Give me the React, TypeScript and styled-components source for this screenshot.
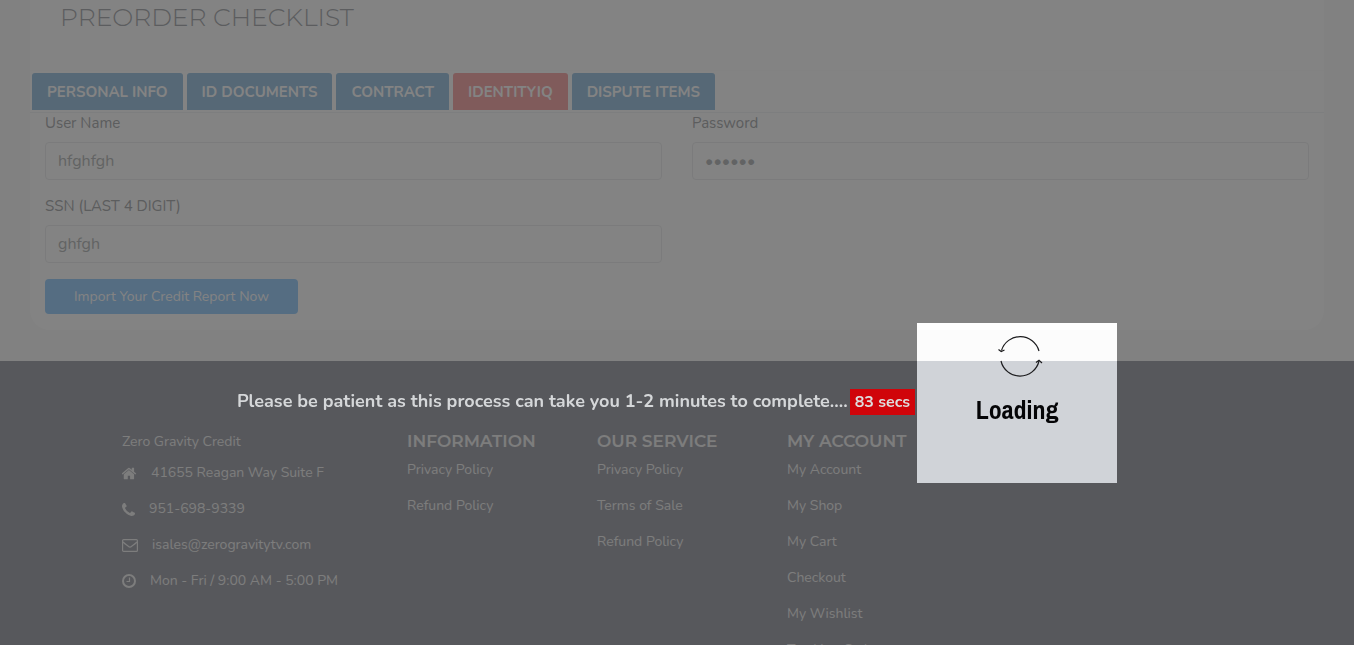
import React from "react";
import styled, { createGlobalStyle } from "styled-components";

const bodyFont = `Nunito, Lato, "Open Sans", sans-serif`;
const headingFont = `Montserrat, Inter, "Open Sans", sans-serif`;

const GlobalStyle = createGlobalStyle`
  *, *::before, *::after { box-sizing: border-box; }
  body {
    margin: 0;
    background: #fafafa;
    font-family: ${bodyFont};
    font-size: 14px;
    line-height: 20px;
    overflow: hidden;
  }
`;

const Page = styled.div`
  height: 100vh;
  overflow: hidden;
`;

const Panel = styled.main`
  margin: 0 30px 31px;
  padding-bottom: 16px;
  background: #ffffff;
  border-radius: 0 0 20px 20px;
`;

const PanelHeader = styled.header`
  height: 71px;
  padding: 1px 30px 0;
  border-bottom: 1px solid #fcfcfc;
`;

const Title = styled.h1`
  margin: 0;
  color: #b0b2b6;
  font-family: ${headingFont};
  font-size: 25px;
  font-weight: 300;
  line-height: 32px;
`;

const Tabs = styled.nav`
  display: flex;
  gap: 4px;
  padding: 2px;
  border-bottom: 1px solid #f2f4f6;
`;

const Tab = styled.button<{ $active?: boolean }>`
  height: 37px;
  padding: 0 15px;
  border: 0;
  border-radius: 3px 3px 0 0;
  background: ${(p) => (p.$active ? "#f8aeae" : "#a4c8e4")};
  color: #ffffff;
  font-family: inherit;
  font-size: 15px;
  font-weight: 700;
  line-height: 20px;
  white-space: nowrap;
`;

const Form = styled.form`
  display: grid;
  grid-template-columns: 1fr 1fr;
  column-gap: 30px;
  row-gap: 16px;
  padding: 0 15px;
`;

const Field = styled.div`
  display: flex;
  flex-direction: column;
`;

const Label = styled.label`
  margin-bottom: 8px;
  color: #b0b2b4;
  font-size: 15px;
  line-height: 21px;
`;

const Input = styled.input`
  width: 100%;
  height: 38px;
  padding: 0 12px;
  border: 1px solid #eeeff1;
  border-radius: 4px;
  background: #ffffff;
  color: #bcbec0;
  font-family: inherit;
  font-size: 16px;
  outline: none;
`;

const ImportButton = styled.button`
  grid-column: 1 / -1;
  justify-self: start;
  height: 35px;
  padding: 0 29px;
  border: 0;
  border-radius: 4px;
  background: #a2d2fc;
  color: #ffffff;
  font-family: inherit;
  font-size: 14px;
`;

const Footer = styled.footer`
  min-height: 360px;
  padding-top: 71px;
  background: #a6a8b0;
`;

const Container = styled.div`
  display: flex;
  max-width: 1140px;
  margin: 0 auto;
`;

const Column = styled.section<{ $wide?: boolean }>`
  flex: 0 0 ${(p) => (p.$wide ? "25%" : "16.6667%")};
  padding: 0 15px;
  color: #f2f2f2;
`;

const ColumnTitle = styled.h2`
  margin: 0 0 10px;
  font-family: ${headingFont};
  font-size: 17px;
  font-weight: 600;
  line-height: 18px;
  white-space: nowrap;
`;

const List = styled.ul`
  display: flex;
  flex-direction: column;
  gap: 16px;
  margin: 0;
  padding: 0;
  list-style: none;
`;

const FooterLink = styled.a`
  color: inherit;
  text-decoration: none;
`;

const Company = styled.p`
  margin: 0 0 11px;
`;

const ContactRow = styled.li`
  display: flex;
  align-items: center;
  gap: 14px;
  white-space: nowrap;
`;

const ContactIcon = styled.svg<{ $width: number; $height: number }>`
  flex: none;
  width: ${(p) => p.$width}px;
  height: ${(p) => p.$height}px;
`;

const Overlay = styled.div`
  position: fixed;
  inset: 0;
  display: flex;
  align-items: flex-start;
  justify-content: center;
  gap: 2px;
  padding-top: 50vh;
  background: rgba(8, 8, 8, 0.5);
`;

const Message = styled.p`
  margin: 66px 0 0;
  color: #d5d7d9;
  font-size: 18px;
  font-weight: 700;
  line-height: 24px;
  white-space: nowrap;
`;

const Countdown = styled.span`
  margin-top: 66px;
  padding: 0 5px;
  background: #d0040a;
  color: #dedede;
  font-size: 16px;
  font-weight: 700;
  line-height: 26px;
  white-space: nowrap;
`;

const LoadingBox = styled.div`
  display: flex;
  flex-direction: column;
  align-items: center;
  width: 200px;
  height: 160px;
  padding-top: 10px;
  background: linear-gradient(#ffffff 7px, #fcfcfc 7px 38px, #d0d3d8 38px);
`;

const Spinner = styled.svg`
  width: 46px;
  height: 46px;
  margin-left: 6px;
`;

const LoadingText = styled.span`
  margin-top: 14px;
  color: #050507;
  font-family: "Libre Franklin Condensed", "Archivo Narrow", "Liberation Sans Narrow", "Pragati Narrow", Roboto, sans-serif;
  font-size: 26px;
  font-weight: 700;
  line-height: 34px;
`;

const tabs = ["PERSONAL INFO", "ID DOCUMENTS", "CONTRACT", "IDENTITYIQ", "DISPUTE ITEMS"];

const linkColumns = [
  { title: "INFORMATION", links: ["Privacy Policy", "Refund Policy"] },
  { title: "OUR SERVICE", links: ["Privacy Policy", "Terms of Sale", "Refund Policy"] },
  {
    title: "MY ACCOUNT",
    links: ["My Account", "My Shop", "My Cart", "Checkout", "My Wishlist", "Tracking Order"],
  },
];

export default function App() {
  return (
    <>
      <GlobalStyle />
      <Page>
        <Panel>
          <PanelHeader>
            <Title>PREORDER CHECKLIST</Title>
          </PanelHeader>
          <Tabs>
            {tabs.map((name) => (
              <Tab key={name} type="button" $active={name === "IDENTITYIQ"}>
                {name}
              </Tab>
            ))}
          </Tabs>
          <Form>
            <Field>
              <Label htmlFor="user">User Name</Label>
              <Input id="user" type="text" defaultValue="hfghfgh" />
            </Field>
            <Field>
              <Label htmlFor="password">Password</Label>
              <Input id="password" type="password" defaultValue="secret" />
            </Field>
            <Field>
              <Label htmlFor="ssn">SSN (LAST 4 DIGIT)</Label>
              <Input id="ssn" type="text" defaultValue="ghfgh" />
            </Field>
            <ImportButton type="button">Import Your Credit Report Now</ImportButton>
          </Form>
        </Panel>
        <Footer>
          <Container>
            <Column $wide>
              <Company>Zero Gravity Credit</Company>
              <List>
                <ContactRow>
                  <ContactIcon $width={15} $height={13} viewBox="60 250 1672 1300" fill="currentColor">
                    <path d="M1408 992v480q0 26-19 45t-45 19h-384v-384h-256v384h-384q-26 0-45-19t-19-45v-480q0-1 .5-3t.5-3l575-474 575 474q1 2 1 6zm223-69l-62 74q-8 9-21 11h-3q-13 0-21-7l-692-577-692 577q-12 8-24 7-13-2-21-11l-62-74q-8-10-7-23.500t11-21.500l719-599q32-26 76-26t76 26l244 204v-195q0-14 9-23t23-9h192q14 0 23 9t9 23v408l219 182q10 8 11 21.500t-7 23.500z" />
                  </ContactIcon>
                  41655 Reagan Way Suite F
                </ContactRow>
                <ContactRow>
                  <ContactIcon $width={13} $height={13} viewBox="192 128 1408 1408" fill="currentColor">
                    <path d="M1600 1240q0 27-10 70.500t-21 68.500q-21 50-122 106-94 51-186 51-27 0-53-3.500t-57.500-12.500-47-14.500-55.500-20.500-49-18q-98-35-175-83-127-79-264-216t-216-264q-48-77-83-175-3-9-18-49t-20.500-55.500-14.500-47-12.500-57.500-3.500-53q0-92 51-186 56-101 106-122 25-11 68.500-21t70.500-10q14 0 21 3 18 6 53 76 11 19 30 54t35 63.500 31 53.500q3 4 17.500 25t21.500 35.500 7 28.500q0 20-28.500 50t-62 55-62 53-28.500 46q0 9 5 22.500t8.500 20.500 14 24 11.500 19q76 137 174 235t235 174q2 1 19 11.500t24 14 20.500 8.500 22.500 5q18 0 46-28.500t53-62 55-62 50-28.500q14 0 28.500 7t35.500 21.500 25 17.500q25 15 53.500 31t63.500 35 54 30q70 35 76 53 3 7 3 21z" />
                  </ContactIcon>
                  951-698-9339
                </ContactRow>
                <ContactRow>
                  <ContactIcon $width={16} $height={13} viewBox="0 0 16 13" fill="none" stroke="currentColor" strokeWidth="1.2">
                    <rect x="0.6" y="0.6" width="14.8" height="11.8" rx="1" />
                    <path d="M1 3C3 5 5 6.200 6.500 7.500C7.500 8.200 8.500 8.200 9.500 7.500C11 6.200 13 5 15 3" />
                  </ContactIcon>
                  <FooterLink href="mailto:isales@zerogravitytv.com">isales@zerogravitytv.com</FooterLink>
                </ContactRow>
                <ContactRow>
                  <ContactIcon $width={14} $height={14} viewBox="0 0 14 14" fill="none" stroke="currentColor">
                    <circle cx="7" cy="7" r="6" strokeWidth="2" />
                    <path d="M7.500 3.500V7.500H4.500" strokeWidth="1.2" />
                  </ContactIcon>
                  Mon - Fri / 9:00 AM - 5:00 PM
                </ContactRow>
              </List>
            </Column>
            {linkColumns.map((column) => (
              <Column key={column.title}>
                <ColumnTitle>{column.title}</ColumnTitle>
                <List>
                  {column.links.map((link) => (
                    <li key={link}>
                      <FooterLink href="#">{link}</FooterLink>
                    </li>
                  ))}
                </List>
              </Column>
            ))}
          </Container>
        </Footer>
      </Page>
      <Overlay role="status">
        <Message>Please be patient as this process can take you 1-2 minutes to complete....</Message>
        <Countdown>83 secs</Countdown>
        <LoadingBox>
          <Spinner viewBox="0 0 46 46" fill="none" stroke="#1c1c1e" strokeWidth="1.2">
            <path d="M4.500 17.500A19.500 19.500 0 0 1 42 18" />
            <path d="M1.500 16.500L4.200 18.500L7.500 17" />
            <path d="M4 28A19.500 19.500 0 0 0 42 28" />
            <path d="M39 29.500L42 27.200L45 30" />
          </Spinner>
          <LoadingText>Loading</LoadingText>
        </LoadingBox>
      </Overlay>
    </>
  );
}
